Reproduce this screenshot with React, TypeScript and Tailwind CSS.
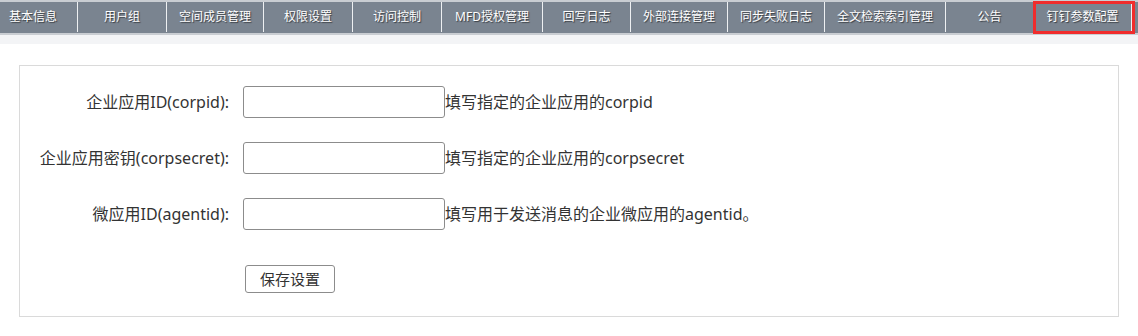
import React from 'react';

const tabs = [
  { label: '基本信息', w: 'w-[77px]' },
  { label: '用户组', w: 'w-[89px]' },
  { label: '空间成员管理', w: 'w-[97px]' },
  { label: '权限设置', w: 'w-[89px]' },
  { label: '访问控制', w: 'w-[89px]' },
  { label: 'MFD授权管理', w: 'w-[101px]' },
  { label: '回写日志', w: 'w-[88px]' },
  { label: '外部连接管理', w: 'w-[97px]' },
  { label: '同步失败日志', w: 'w-[97px]' },
  { label: '全文检索索引管理', w: 'w-[121px]' },
  { label: '公告', w: 'w-[88px]' },
  { label: '钉钉参数配置', w: 'w-[98px]' },
];

const fields = [
  { label: '企业应用ID(corpid):', hint: '填写指定的企业应用的corpid' },
  { label: '企业应用密钥(corpsecret):', hint: '填写指定的企业应用的corpsecret' },
  { label: '微应用ID(agentid):', hint: '填写用于发送消息的企业微应用的agentid。' },
];

export default function App() {
  return (
    <div className="w-[1138px] h-[336px] overflow-hidden bg-white font-['Noto_Sans','Noto_Sans_CJK_SC',sans-serif] text-[#333]">
      <div className="h-[2px] bg-[#c9cdd2]" />
      <div className="relative flex h-[31px] bg-[#7a8490] border-b-2 border-[#c9cdd2] box-content">
        {tabs.map((tab, i) => (
          <div
            key={tab.label}
            className={`${tab.w} h-[30px] flex items-center text-[12px] text-white [text-shadow:1px_1px_1px_rgba(0,0,0,0.55)] ${
              i === 0 ? 'justify-start pl-[9px]' : 'justify-center border-l border-[#eef0f2]'
            }`}
          >
            {tab.label}
          </div>
        ))}
        <div className="h-[30px] border-l border-[#eef0f2]" />
        <div className="absolute left-[1033px] top-[-1px] w-[102px] h-[33px] border-[3px] border-[#f02c2c]" />
      </div>
      <div className="h-[9px] bg-[#f3f4f6]" />
      <div className="bg-white rounded-tl-[5px] pt-[21px] pl-[19px]">
        <div className="w-[1100px] h-[252px] border border-[#dadada] pt-[20px]">
          <div className="flex flex-col gap-[24px]">
            {fields.map((f) => (
              <div key={f.label} className="flex items-center h-[32px] text-[16px]">
                <div className="w-[223px] pr-[14px] text-right whitespace-nowrap">{f.label}</div>
                <input
                  type="text"
                  className="w-[202px] h-[32px] border border-[#8c8c8c] rounded-[3px] bg-white"
                />
                <span className="whitespace-nowrap">{f.hint}</span>
              </div>
            ))}
          </div>
          <button
            type="button"
            className="mt-[35px] ml-[225px] w-[90px] h-[28px] border border-[#8c8c8c] rounded-[3px] bg-white text-[15px] leading-none text-[#333]"
          >
            保存设置
          </button>
        </div>
      </div>
    </div>
  );
}
